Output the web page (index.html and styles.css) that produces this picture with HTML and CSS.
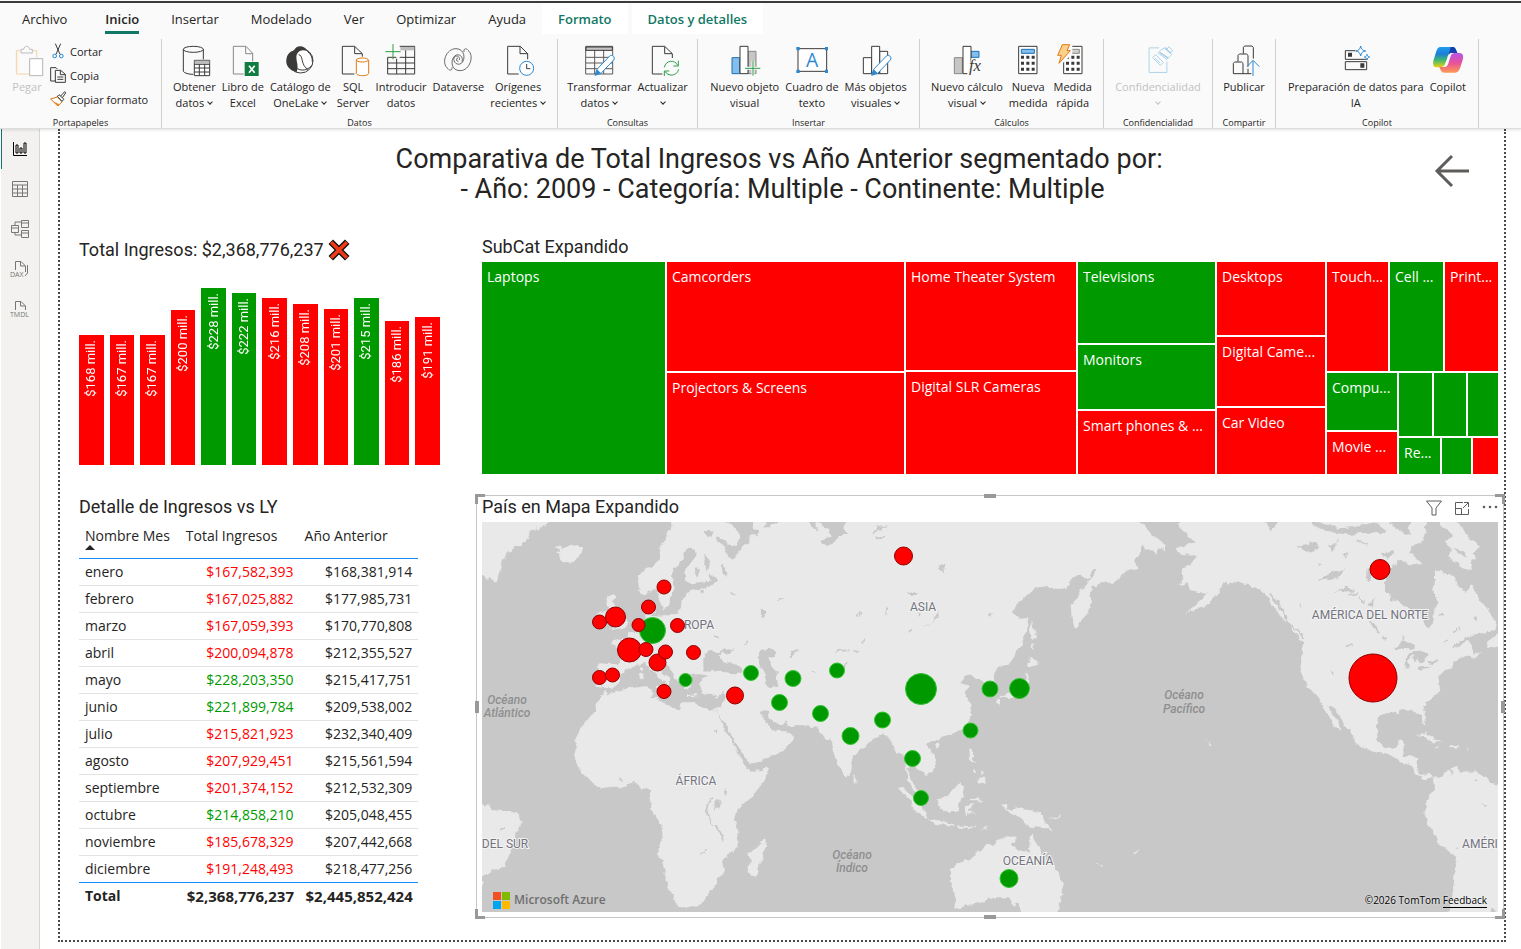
FILE: index.html
```html
<!DOCTYPE html>
<html lang="es">
<head>
<meta charset="utf-8">
<meta name="viewport" content="width=device-width, initial-scale=1">
<title>Comparativa de Total Ingresos</title>
<link rel="stylesheet" href="styles.css">
</head>
<body>
<header class="ribbon">
  <nav class="tabs" aria-label="Cinta de opciones">
    <button class="tab tab-first">Archivo</button>
    <button class="tab tab-active" aria-current="page">Inicio</button>
    <button class="tab">Insertar</button>
    <button class="tab">Modelado</button>
    <button class="tab">Ver</button>
    <button class="tab">Optimizar</button>
    <button class="tab">Ayuda</button>
    <button class="tab tab-context">Formato</button>
    <button class="tab tab-context">Datos y detalles</button>
  </nav>
  <div class="groups">
    <section class="group group-clipboard">
      <div class="tools clipboard">
        <button class="tool" disabled>
          <svg class="icon" viewBox="0 0 96 96"><path d="M28 20H16V90H56M66 20H77V40" class="s" stroke="#f3d3a8"/><path d="M20 24V86" class="s" stroke="#fbeedb"/><path d="M30 27V16H38C40 4 54 4 56 16H64V27Z" class="s" stroke="#bdbdbd"/><path d="M56 44H95V95H56Z" class="s" fill="#fff" stroke="#b5b5b5"/></svg>
          <span>Pegar</span>
        </button>
        <div class="small-tools">
          <button class="small-tool"><svg class="icon-small" viewBox="0 0 48 48"><path d="M16 2L30 34M32 2L18 34" class="s" stroke="#3b3a39"/><circle cx="14" cy="39" r="5.500" class="s" stroke="#1f87cc"/><circle cx="34" cy="39" r="5.500" class="s" stroke="#1f87cc"/></svg>Cortar</button>
          <button class="small-tool"><svg class="icon-small" viewBox="0 0 48 48"><path d="M18 42H2V2H18L22 6M16 10H32L46 22V46H16ZM31 10V23H46M22 30H40M22 37H40" class="s" stroke="#3b3a39"/></svg>Copia</button>
          <button class="small-tool"><svg class="icon-small" viewBox="0 0 48 48"><path d="M2 24L22 18L36 32L24 45Z" fill="#fff" class="s" stroke="#d8730b"/><path d="M8 30L28 40L22 45Z" fill="#e98a2b"/><path d="M22 16L27 11L42 25L36 31ZM32 15L44 2L47 6L37 20" class="s" stroke="#3b3a39"/></svg>Copiar formato</button>
        </div>
      </div>
      <h2 class="group-name">Portapapeles</h2>
    </section>

    <section class="group group-data">
      <div class="tools">
        <button class="tool"><svg class="icon" viewBox="0 0 96 96"><path d="M16 16V82C20 88 32 91 46 91M76 16V46" class="s k"/><ellipse cx="46" cy="16" rx="30" ry="9" class="s k"/><path d="M49 49H95V95H49Z" fill="#fff" class="s k"/><path d="M50 50H94V59H50Z" fill="#bdbdbd"/><path d="M49 61H95M49 72H95M49 84H95M64 61V95M80 61V95" class="s k" stroke-width="2"/></svg><span>Obtener<br>datos <i class="chev"></i></span></button>
        <button class="tool"><svg class="icon" viewBox="0 0 96 96"><path d="M50 90H19V7H57L77 28V52M56 8V29H77" class="s" stroke="#8a8886"/><path d="M53 54H95V96H53Z" fill="#107c41"/><path d="M66 65L83 86M83 65L66 86" stroke="#fff" stroke-width="5"/></svg><span>Libro de<br>Excel</span></button>
        <button class="tool"><svg class="icon" viewBox="0 0 96 96"><circle cx="50" cy="50" r="37" fill="#fff" class="s k" stroke-width="4"/><path d="M30 20C36 2 62 2 70 22C58 16 44 18 38 32C34 50 46 62 38 84C16 80 2 62 8 42C10 30 20 20 30 20Z" fill="#3b3a39"/><path d="M44 32C58 32 50 66 72 76M30 64C42 82 66 84 84 64M70 22C80 30 86 40 85 54" class="s k" stroke-width="4"/></svg><span>Catálogo de<br>OneLake <i class="chev"></i></span></button>
        <button class="tool"><svg class="icon" viewBox="0 0 96 96"><path d="M52 90H16V7H53L76 29V38M53 8V29H75" class="s k"/><path d="M58 48V89C62 97 92 97 95 89V48" fill="#fff" class="s" stroke="#e07b16"/><ellipse cx="76" cy="48" rx="18" ry="6" fill="#fff" class="s" stroke="#e07b16"/></svg><span>SQL<br>Server</span></button>
        <button class="tool"><svg class="icon" viewBox="0 0 96 96"><path d="M8 7H89V90H8ZM8 40H89M8 57H89M8 74H89M35 18V90M62 18V90" class="s k"/><path d="M46 9H88V19H46Z" fill="#bdbdbd"/><path d="M0 2H44V44H0Z" fill="#fafafa"/><path d="M8 46V40H34" class="s k"/><path d="M24 0V46M1 23H47" class="s" stroke="#2d9f47"/></svg><span>Introducir<br>datos</span></button>
        <button class="tool"><svg class="icon" viewBox="0 0 96 96"><path d="M18 74C-4 58 12 14 42 14C68 14 72 46 58 58C46 66 32 54 36 42C40 32 56 36 52 48M78 19C98 34 84 80 54 80C28 80 24 50 38 36C50 26 66 38 60 54M18 74C24 82 32 78 30 70M78 19C72 11 64 14 66 24M48 42A5 5 0 1 0 49 52" class="s" stroke="#69696b"/></svg><span>Dataverse</span></button>
        <button class="tool"><svg class="icon wide" viewBox="0 0 108 96"><path d="M56 90H23V7H61L83 29V46M60 8V29H83" class="s k"/><circle cx="80" cy="73" r="21" fill="#fff" class="s" stroke="#2b88d0"/><path d="M80 60V74H91" class="s k"/></svg><span>Orígenes<br>recientes <i class="chev"></i></span></button>
      </div>
      <h2 class="group-name">Datos</h2>
    </section>

    <section class="group group-queries">
      <div class="tools">
        <button class="tool"><svg class="icon" viewBox="0 0 96 96"><path d="M8 7H89V90H8ZM8 40H89M8 57H89M8 74H89M35 18V90M62 18V90" class="s" stroke="#5d5b59"/><path d="M9 9H88V19H9Z" fill="#c8c6c4" class="s" stroke="#3b3a39" stroke-width="2"/><path d="M36 94L42 76L80 36C88 30 98 40 92 48L54 88Z" fill="#fff" class="s" stroke="#2b88d0"/><path d="M36 94L42 76L54 88Z" fill="#2b88d0"/></svg><span>Transformar<br>datos <i class="chev"></i></span></button>
        <button class="tool"><svg class="icon" viewBox="0 0 96 96"><path d="M46 90H16V7H53L76 29V42M53 8V29H75" class="s k"/><path d="M52 70C56 48 84 46 92 64M94 50V66H79M95 76C90 98 62 98 54 82M52 96V81H67" class="s" stroke="#2d9f47"/></svg><span>Actualizar<br><i class="chev"></i></span></button>
      </div>
      <h2 class="group-name">Consultas</h2>
    </section>

    <section class="group group-insert">
      <div class="tools">
        <button class="tool"><svg class="icon" viewBox="0 0 96 96"><path d="M9 41H32V89H9Z" fill="#83beec" class="s" stroke="#1f6fb2"/><path d="M57 22H81V89H57Z" fill="#c8c6c4" class="s" stroke="#8a8886"/><path d="M33 7H57V89H33Z" fill="#fff" class="s k"/><path d="M48 73H96M72 50V96" stroke="#fafafa" stroke-width="9"/><path d="M48 73H94M72 50V95" class="s" stroke="#2d9f47"/></svg><span>Nuevo objeto<br>visual</span></button>
        <button class="tool"><svg class="icon" viewBox="0 0 96 96"><path d="M6 14H92V82H6Z" fill="#fff" class="s k"/><path d="M1 9H11V19H1ZM87 9H96V19H87ZM1 77H11V87H1ZM87 77H96V87H87Z" fill="#2b88d0"/><text x="48" y="69" class="glyph-a">A</text></svg><span>Cuadro de<br>texto</span></button>
        <button class="tool"><svg class="icon" viewBox="0 0 96 96"><path d="M10 41H35V89H10ZM59 22H83V89H59Z" fill="#fff" class="s k"/><path d="M35 7H59V89H35Z" fill="#fff" class="s k"/><path d="M35 94L41 76L79 36C87 30 97 40 91 48L53 88Z" fill="#fff" class="s" stroke="#2b88d0"/><path d="M35 94L41 76L53 88Z" fill="#2b88d0"/></svg><span>Más objetos<br>visuales <i class="chev"></i></span></button>
      </div>
      <h2 class="group-name">Insertar</h2>
    </section>

    <section class="group group-calc">
      <div class="tools">
        <button class="tool"><svg class="icon" viewBox="0 0 96 96"><path d="M10 41H34V89H10Z" fill="#c8c6c4" class="s" stroke="#8a8886"/><path d="M60 22H84V40H60Z" fill="#83beec" class="s" stroke="#1f6fb2"/><path d="M36 7H60V89H36Z" fill="#fff" class="s k"/><path d="M48 92L62 42H96V96Z" fill="#fafafa"/><text x="72" y="81" class="glyph-fx">fx</text></svg><span>Nuevo cálculo<br>visual <i class="chev"></i></span></button>
        <button class="tool"><svg class="icon" viewBox="0 0 96 96"><path d="M20 7H75V89H20Z" fill="#fff" class="s k"/><path d="M28 16H67V28H28Z" fill="#83beec" class="s" stroke="#1f6fb2"/><path d="M27 40H68M27 58H68M27 76H68" stroke="#3b3a39" stroke-width="9" stroke-dasharray="9 7"/></svg><span>Nueva<br>medida</span></button>
        <button class="tool"><svg class="icon" viewBox="0 0 96 96"><path d="M20 7H75V89H20Z" fill="#fff" class="s k"/><path d="M28 16H67V28H28Z" fill="#d2d0ce" class="s" stroke="#8a8886"/><path d="M27 40H68M27 58H68M27 76H68" stroke="#3b3a39" stroke-width="9" stroke-dasharray="9 7"/><path d="M0 0H46V30L8 66H0Z" fill="#fafafa"/><path d="M16 2H38L30 20H40L6 58L13 34H2Z" fill="#fbd08a" class="s" stroke="#e07b16" stroke-width="4"/></svg><span>Medida<br>rápida</span></button>
      </div>
      <h2 class="group-name">Cálculos</h2>
    </section>

    <section class="group group-sens">
      <div class="tools">
        <button class="tool" disabled><svg class="icon" viewBox="0 0 108 96"><path d="M58 7H24V90H84V54" class="s" stroke="#a5cfe8"/><path d="M46 30L72 56L62 66L36 40ZM44 41L61 58M64 14L78 6L84 12L90 3L104 16L94 23L100 30L84 46L54 24Z" class="s" stroke="#a5cfe8"/><path d="M60 22L88 42M78 8L98 26" stroke="#a5cfe8" stroke-width="5"/></svg><span>Confidencialidad<br><i class="chev"></i></span></button>
      </div>
      <h2 class="group-name">Confidencialidad</h2>
    </section>

    <section class="group group-share">
      <div class="tools">
        <button class="tool"><svg class="icon" viewBox="0 0 96 96"><path d="M16 89V58L20 54H41L45 58V89ZM30 53V34L34 30H56L60 34V68M46 29V10L50 6H72L76 10V44M45 89H70M60 74V89" class="s k"/><path d="M75 96V50M57 68L75 49L94 68" class="s" stroke="#2b88d0" stroke-width="4"/></svg><span>Publicar<br>&nbsp;</span></button>
      </div>
      <h2 class="group-name">Compartir</h2>
    </section>

    <section class="group group-copilot">
      <div class="tools">
        <button class="tool"><svg class="icon" viewBox="0 0 96 96"><path d="M46 20H16V46H80V44M16 53H80V77H16Z" class="s k" stroke-width="4"/><path d="M24 26H36V38H24ZM61 58H73V71H61Z" fill="#3b3a39"/><path d="M62 6C64 16 68 20 77 21C68 22 64 26 62 36C60 26 56 22 47 21C56 20 60 16 62 6ZM81 31C82 37 84 38 89 39C84 40 82 42 81 48C80 42 78 40 73 39C78 38 80 37 81 31Z" fill="#fff" class="s" stroke="#2b88d0"/></svg><span>Preparación de datos para<br>IA</span></button>
        <button class="tool"><svg class="icon" viewBox="0 0 96 96"><defs><linearGradient id="cpA" x1="0" y1="0" x2="0" y2="1"><stop offset="0" stop-color="#1d9cf0"/><stop offset=".35" stop-color="#1c7fd6"/><stop offset=".65" stop-color="#42b96d"/><stop offset="1" stop-color="#f2cf10"/></linearGradient><linearGradient id="cpB" x1="0" y1="0" x2="0" y2="1"><stop offset="0" stop-color="#b456ea"/><stop offset=".5" stop-color="#e8509a"/><stop offset="1" stop-color="#fd9a52"/></linearGradient></defs><path d="M26 9H62C70 9 72 17 76 27H58C50 27 48 34 45 44L39 60C36 67 32 70 24 70H15C4 70 1 62 5 47L13 22C16 13 19 9 26 9Z" fill="url(#cpA)"/><path d="M70 86H38C28 86 26 79 22 69H38C46 69 48 62 51 52L56 36C59 29 63 27 71 27H81C92 27 96 35 92 48L84 73C80 82 77 86 70 86Z" fill="url(#cpB)"/><path d="M56 9H62C70 9 72 17 76 27H58C54 27 52 29 50 32Z" fill="#173fae"/></svg><span>Copilot</span></button>
      </div>
      <h2 class="group-name">Copilot</h2>
    </section>
  </div>
</header>

<div class="workspace">
  <nav class="rail" aria-label="Vistas">
    <button class="rail-item rail-active" aria-label="Vista de informe"><svg viewBox="0 0 16 16"><path d="M1.500 1V14.500H15M4 4H6V12H4ZM8 7H10V12H8ZM12 2H14V12H12Z" class="r"/></svg></button>
    <button class="rail-item" aria-label="Vista de tabla"><svg viewBox="0 0 16 16"><path d="M.5.500H15.500V15.500H.5ZM.5 4H15.500M.5 8H15.500M.5 12H15.500M5.500 4V15.500M10.500 4V15.500" class="r"/></svg></button>
    <button class="rail-item" aria-label="Vista de modelo"><svg class="rail-wide" viewBox="0 0 20 20"><path d="M1.500 6.500H8.500V13.500H1.500ZM1.500 9H8.500M11.500 1.500H18.500V8.500H11.500ZM11.500 4H18.500M11.500 11.500H18.500V18.500H11.500ZM11.500 14H18.500M5 6V3H11M5 14V16H11" class="r"/></svg></button>
    <button class="rail-item" aria-label="Consultas DAX"><svg class="rail-wide" viewBox="0 0 20 20"><path d="M5.500 11V2.500H11L15.500 7V13M10.500 2.500V7H15M17.500 6V14L15 17" class="r"/><text x="0" y="18" class="rail-text">DAX</text></svg></button>
    <button class="rail-item" aria-label="Vista TMDL"><svg class="rail-wide" viewBox="0 0 20 20"><path d="M5.500 11V2.500H11L15.500 7V11M10.500 2.500V7H15" class="r"/><text x="0" y="18" class="rail-text">TMDL</text></svg></button>
  </nav>

  <main class="canvas">
    <div class="page">
      <div class="page-head">
        <h1>Comparativa de Total Ingresos vs Año Anterior segmentado por:&nbsp;<br>- Año: 2009 - Categoría: Multiple - Continente: Multiple</h1>
        <button class="back" aria-label="Atrás"><svg viewBox="0 0 36 36"><path d="M35 18H3M18 3L3 18L18 33" fill="none" stroke="#5f5d5b" stroke-width="3"/></svg></button>
      </div>

      <section class="visual income">
        <h2 class="visual-title">Total Ingresos: $2,368,776,237 <svg class="cross" viewBox="0 0 24 24"><path d="M3 3L21 21M21 3L3 21" stroke="#111" stroke-width="7"/><path d="M3.500 3.500L20.500 20.500M20.500 3.500L3.500 20.500" stroke="#f03a17" stroke-width="4"/></svg></h2>
        <div class="bars">
          <div class="bar" style="height:73.4%"><span>$168 mill.</span></div>
          <div class="bar" style="height:73.2%"><span>$167 mill.</span></div>
          <div class="bar" style="height:73.2%"><span>$167 mill.</span></div>
          <div class="bar" style="height:87.7%"><span>$200 mill.</span></div>
          <div class="bar up" style="height:100%"><span>$228 mill.</span></div>
          <div class="bar up" style="height:97.2%"><span>$222 mill.</span></div>
          <div class="bar" style="height:94.6%"><span>$216 mill.</span></div>
          <div class="bar" style="height:91.1%"><span>$208 mill.</span></div>
          <div class="bar" style="height:88.2%"><span>$201 mill.</span></div>
          <div class="bar up" style="height:94.2%"><span>$215 mill.</span></div>
          <div class="bar" style="height:81.4%"><span>$186 mill.</span></div>
          <div class="bar" style="height:83.8%"><span>$191 mill.</span></div>
        </div>
      </section>

      <section class="visual subcat">
        <h2 class="visual-title">SubCat Expandido</h2>
        <div class="treemap">
          <div class="tile up">Laptops</div>
          <div class="rows rows-b"><div class="tile">Camcorders</div><div class="tile">Projectors &amp; Screens</div></div>
          <div class="rows rows-c"><div class="tile">Home Theater System</div><div class="tile">Digital SLR Cameras</div></div>
          <div class="rows rows-d"><div class="tile up">Televisions</div><div class="tile up">Monitors</div><div class="tile">Smart phones &amp; ...</div></div>
          <div class="rows rows-e"><div class="tile">Desktops</div><div class="tile">Digital Came...</div><div class="tile">Car Video</div></div>
          <div class="rows rows-f">
            <div class="cols cols-f"><div class="tile">Touch...</div><div class="tile up">Cell ...</div><div class="tile">Print...</div></div>
            <div class="cols cols-g">
              <div class="rows rows-g"><div class="tile up">Compu...</div><div class="tile">Movie ...</div></div>
              <div class="rows rows-h">
                <div class="cols cols-h"><div class="tile up"></div><div class="tile up"></div><div class="tile up"></div></div>
                <div class="cols cols-i"><div class="tile up">Re...</div><div class="tile up"></div><div class="tile"></div></div>
              </div>
            </div>
          </div>
        </div>
      </section>

      <section class="visual detail">
        <h2 class="visual-title">Detalle de Ingresos vs LY</h2>
        <table>
          <colgroup><col class="col-month"><col class="col-value"><col class="col-value"></colgroup>
          <thead><tr><th scope="col" aria-sort="ascending">Nombre Mes<i class="sort"></i></th><th scope="col">Total Ingresos</th><th scope="col">Año Anterior</th></tr></thead>
          <tbody>
            <tr><td>enero</td><td class="down">$167,582,393</td><td>$168,381,914</td></tr>
            <tr><td>febrero</td><td class="down">$167,025,882</td><td>$177,985,731</td></tr>
            <tr><td>marzo</td><td class="down">$167,059,393</td><td>$170,770,808</td></tr>
            <tr><td>abril</td><td class="down">$200,094,878</td><td>$212,355,527</td></tr>
            <tr><td>mayo</td><td class="rise">$228,203,350</td><td>$215,417,751</td></tr>
            <tr><td>junio</td><td class="rise">$221,899,784</td><td>$209,538,002</td></tr>
            <tr><td>julio</td><td class="down">$215,821,923</td><td>$232,340,409</td></tr>
            <tr><td>agosto</td><td class="down">$207,929,451</td><td>$215,561,594</td></tr>
            <tr><td>septiembre</td><td class="down">$201,374,152</td><td>$212,532,309</td></tr>
            <tr><td>octubre</td><td class="rise">$214,858,210</td><td>$205,048,455</td></tr>
            <tr><td>noviembre</td><td class="down">$185,678,329</td><td>$207,442,668</td></tr>
            <tr><td>diciembre</td><td class="down">$191,248,493</td><td>$218,477,256</td></tr>
          </tbody>
          <tfoot><tr><td>Total</td><td>$2,368,776,237</td><td>$2,445,852,424</td></tr></tfoot>
        </table>
      </section>

      <section class="visual map-visual">
        <div class="map-head">
          <h2 class="visual-title">País en Mapa Expandido</h2>
          <div class="map-actions">
            <button aria-label="Filtros"><svg viewBox="0 0 16 16"><path d="M.5 1H15.500L10 8V15H6V8Z" class="r"/></svg></button>
            <button aria-label="Modo de enfoque"><svg viewBox="0 0 16 16"><path d="M9 2.500H1.500V14.500H14.500V9M1.500 8.500H7.500V14.500M9 8L14 3M10 2.500H14.500V7" class="r"/></svg></button>
            <button aria-label="Más opciones"><svg viewBox="0 0 16 16"><circle cx="2" cy="7" r="1.300"/><circle cx="8" cy="7" r="1.300"/><circle cx="14" cy="7" r="1.300"/></svg></button>
          </div>
        </div>
        <div class="map">
          <svg class="world" viewBox="482 522 1016 390" role="img" aria-label="Mapa de países">
            <defs>
              <filter id="coast" filterUnits="userSpaceOnUse" x="470" y="510" width="1040" height="414"><feTurbulence type="fractalNoise" baseFrequency=".14" numOctaves="3" seed="4"/><feDisplacementMap in="SourceGraphic" scale="6" xChannelSelector="R" yChannelSelector="G"/></filter>
            </defs>
            <rect x="470" y="510" width="1040" height="414" fill="#c8c8c8"/>
            <g filter="url(#coast)">
            <g transform="translate(470 485) scale(.33333)">
              <path class="land" d="M15 90H245L240 111L225 122L205 130L180 135L175 155L165 170L150 185L130 182L125 200L105 205L107 225L95 230L90 255L85 270L80 292L70 290L65 278L50 282L36 270L15 260Z
              M256 180L275 183L272 192L290 185L310 182L325 178L338 192L335 208L318 222L297 236L275 230L270 210L258 205L272 200Z
              M412 330L430 325L438 335L425 350L440 365L450 385L468 400L475 415L465 430L440 432L415 436L430 425L420 415L418 395L425 380L415 365L410 345ZM385 380L405 378L410 395L400 425L375 428L368 410Z
              M558 603L590 600L585 614ZM508 567L520 564L520 580L510 585ZM513 545L519 543L519 558L513 556ZM655 628L682 630L682 634L656 633ZM730 634L748 630L740 638Z
              M600 90H1065V732L1010 724L945 722L920 735L930 735L948 745L970 752L965 770L950 790L920 805L880 825L838 838L832 828L822 810L800 785L785 750L765 715L740 683L730 672L755 668L762 640L765 625L740 628L715 630L695 622L690 600L695 580L720 572L690 568L660 570L668 590L660 605L645 610L630 590L615 575L600 548L585 535L570 525L560 522L558 540L575 560L602 582L592 598L578 588L560 570L540 550L525 535L500 540L485 550L470 555L450 570L450 590L440 600L425 612L410 612L400 605L380 602L374 580L385 560L380 535L440 538L455 520L450 500L440 485L420 475L440 465L470 462L475 445L505 435L520 415L530 400L528 375L525 350L542 345L545 365L558 380L545 392L570 395L590 388L622 387L632 370L640 340L655 320L690 310L730 300L722 290L700 290L660 295L645 280L645 255L660 235L678 215L675 195L655 188L645 200L640 225L620 245L606 265L608 290L618 310L600 335L598 360L580 375L568 345L558 305L545 315L525 330L512 325L508 290L505 270L525 255L550 240L570 215L575 185L590 150L605 125Z
              M738 678L700 668L665 655L632 655L628 673L600 665L575 650L545 635L545 610L530 603L490 608L450 618L415 628L403 614L400 630L380 655L375 680L345 710L325 745L315 765L320 790L312 825L325 850L345 870L370 895L392 910L430 905L465 905L475 893L498 895L510 912L530 910L545 925L538 955L550 985L572 1010L578 1050L562 1085L565 1110L580 1140L590 1195L605 1225L622 1265L650 1268L690 1258L715 1230L738 1200L740 1180L760 1165L762 1140L758 1125L800 1090L806 1070L805 1035L793 1000L800 975L850 930L885 885L897 850L845 860L832 848L815 825L795 790L775 750L755 712Z
              M882 1060L889 1080L880 1110L860 1172L845 1177L833 1160L840 1130L836 1105L860 1088Z
              M15 955L36 958L55 962L65 972L95 975L120 975L152 997L155 1015L140 1040L130 1065L125 1100L105 1135L95 1150L65 1155L45 1170L36 1180V1210H15Z"/>
              <path class="sea" d="M735 150L770 175L800 180L815 160L805 135L775 118L750 90H850L845 130L870 140L862 152L838 150L838 175L815 185L800 210L790 225L775 215L765 185L740 165Z
              M880 128L895 108V90H950L925 115L898 125ZM1005 90H1040L1038 108L1060 130L1060 150L1030 130Z
              M700 520L715 495L735 505L760 494L745 512L765 530L800 540L820 550L815 565L790 568L760 558L730 557L700 560ZM755 497L795 490L770 510Z
              M862 518L880 495L905 490L918 500L912 515L895 520L905 545L925 560L920 575L925 605L900 608L885 600L888 570L875 545Z
              M870 675L890 680L900 700L915 712L940 715L947 706L950 720L930 732L910 738L900 728L887 710Z
              M730 955L750 945L748 970L735 972ZM680 245L690 255L682 275L674 262ZM715 270L735 272L742 290L725 298ZM690 315L702 315L700 330L692 328ZM755 235L765 240L770 280L758 265ZM778 315L794 325L790 332ZM700 135L730 140L725 155L705 150ZM705 210L718 225L712 260L702 245ZM875 370L890 380L880 395L872 380ZM735 740L742 735L740 750ZM450 875L460 890L448 890Z"/>
              <path class="water-line" d="M730 935C700 950 710 1000 725 1020M735 1018L755 1040L758 1070M770 915L765 925M690 1110L710 1092M922 350L938 338M875 395L885 382M960 520L968 500L982 495M730 455L745 462M822 480L830 470M90 1036L105 1032"/>
            </g>
            <g transform="translate(720 515) scale(.33333)">
              <path class="land" d="M290 0H1200V187L1180 205L1160 200L1115 213L1110 235L1115 260L1100 300L1065 343L1055 310L1052 270L1075 240L1110 195L1130 165L1118 165L1100 198L1085 175L1070 178L1045 205L1035 225L1000 215L945 220L920 240L875 292L900 310L925 310L918 350L905 385L880 430L865 450L840 452L822 480L822 495L830 510L832 530L815 545L795 540L790 500L765 490L755 475L725 495L722 505L750 513L735 530L745 555L757 580L750 610L735 640L700 655L665 668L655 680L640 672L618 690L645 725L648 755L620 782L600 765L580 752L562 762L575 800L600 830L590 835L570 810L560 780L555 740L545 712L528 718L520 690L500 665L490 655L470 670L445 680L430 700L398 725L398 765L378 788L362 765L345 725L335 695L332 665L318 675L300 655L290 640Z
              M935 315L942 340L948 370L935 372L930 340ZM932 428L958 445L940 457L920 450ZM918 475L928 490L925 510L925 535L900 548L860 545L835 548L870 530L900 520L915 500ZM830 552L842 552L840 572L832 567ZM937 382L942 385L940 405L935 400Z
              M645 688L662 684L652 700ZM748 700L760 705L758 730L765 745L750 737ZM770 795L795 783L797 806L775 802ZM760 762L770 768L766 776ZM782 762L790 775L780 780Z
              M398 780L410 795L408 805L398 805ZM530 815L550 820L590 860L620 890L618 908L585 885L560 845ZM618 910L650 915L702 927V934L650 927ZM710 931L770 935V940L712 938ZM778 946L802 934L800 940Z
              M650 850L680 845L700 825L718 803L732 815L725 850L712 888L690 892L660 880ZM735 870L765 868L748 880L765 900L745 890L742 905ZM750 851L788 851V856H750Z
              M842 868L862 870L860 885L880 880L895 875L960 895L975 920L998 948L975 940L930 935L920 920L880 900L860 888ZM985 908L1010 908L1022 898L1025 904L1010 913Z
              M690 1065L710 1045L750 1035L775 1010L805 985L822 995L835 975L865 963L888 970L878 990L905 1012L925 1015L930 975L938 958L950 985L975 1030L1005 1060L1022 1085L1032 1115L1020 1160L1000 1215H910L895 1165L880 1175L870 1150L830 1145L790 1160L765 1170L735 1172L720 1182L703 1178L705 1150L690 1100ZM1130 1043L1143 1053L1140 1056Z"/>
              <path class="sea" d="M265 0H380L370 40L385 60L355 60L345 80L320 90L300 78L335 65L330 45ZM655 285V305L630 328L605 340L640 318ZM655 148L678 150L668 172L660 165ZM803 295H820L810 305ZM564 232L596 235L592 240H568ZM1155 0H1190L1178 30L1160 24ZM595 290L602 296L598 310Z"/>
              <path class="water-line" d="M345 415L358 406H390M407 408L416 413M498 298L502 275M460 60L470 40L502 34M470 70L495 68M425 385L436 372M570 352L577 342M276 470L290 474M408 302L424 292M212 428L218 412L236 406M372 456L382 440"/>
            </g>
            <g transform="translate(1100 515) scale(.33333)">
              <path class="land" d="M0 0H100L118 21L140 45L175 75L200 90L195 105L175 100L170 122L150 105L125 95L118 115L105 140L112 163L85 165L55 187L35 207L0 203Z
              M245 0L240 40L275 70L285 85L225 100L245 120L287 122L280 140L245 165L250 185L235 210L265 205L275 225L300 235L320 235L300 260L255 297L320 270L350 240L375 195L385 210L410 200L470 215L500 245L525 280L545 310L570 330L580 350L610 380L605 410L602 470L620 510L660 555L685 600L705 635L724 655L715 625L700 600L683 570L700 580L730 620L762 660L765 685L800 705L850 718L870 720L905 742L935 752L945 775L975 793L1000 785L985 777L960 780L948 755L952 725L905 722L915 680L895 675L885 700L855 700L835 680L828 640L835 605L870 590L895 598L900 585L940 587L960 600L975 635L978 610L970 570L1000 545L1018 530L1012 490L1035 465L1060 460L1065 435L1110 420L1115 430L1150 410L1120 415L1115 395L1105 375L1070 395L1055 405L1080 375L1120 360L1190 345L1190 330L1170 290L1140 255L1115 205L1100 235L1075 215L1065 185L1035 170L1005 165L1005 200L1000 225L1012 265L1000 295L992 340L975 335L965 295L925 280L900 262L870 255L868 232L855 230L855 195L880 150L900 140L925 115L940 90L970 80L975 40L995 0Z
              M1000 0H1060L1090 45L1110 70L1135 95L1120 110L1130 130L1110 135L1120 165L1085 155L1060 135L1045 125L1055 100L1035 80L1060 60L1030 40ZM905 135L930 110L950 130L968 148L925 148Z
              M1160 382L1190 360L1215 362V388L1165 398ZM945 660L975 657L1025 682L1000 682L975 667ZM1045 690L1080 695L1065 702L1045 698ZM1003 699L1014 700L1010 704ZM1095 699L1104 700L1100 704Z
              M1000 783L1020 790L1035 770L1075 755L1085 770L1130 770L1160 785L1175 805L1215 812V1215H1045L1060 1120L1068 1025L1055 1015L1020 990L1000 950L972 905L980 860L1005 825L1003 800ZM316 670L324 675L330 684L335 690L328 690L325 680ZM100 1013L118 1003L106 1017Z"/>
              <path class="sea" d="M475 0H540L530 30L510 50L505 35ZM630 15L720 40L770 35L830 20L860 55L800 50L750 60L690 50L645 35ZM870 25L905 0H940L925 45L935 60L905 55ZM590 95L625 90L630 75L650 85L655 100L625 115L610 105ZM665 190L700 170L740 160L710 188L672 196ZM700 235L730 218L765 222L760 230L725 228ZM685 95L705 88L695 108ZM780 240L792 262L785 265ZM805 270L825 250L815 275ZM806 315L822 325L840 355L830 355L815 335ZM730 120L745 112L740 130ZM845 112L882 105L865 135ZM800 165L835 155L820 175L805 200L798 185ZM650 140L668 150L655 152ZM594 262L610 285L600 275ZM880 402L895 388L910 372L920 382L945 390L943 403L915 402ZM913 440L930 415L940 412L925 440L926 460L915 462ZM935 410L965 412L985 415L975 440L960 445L950 430L948 445ZM953 462L995 450L980 462L955 468ZM985 440L1015 433L1012 442L988 446ZM850 365L862 368L855 375ZM905 360L915 368L908 372ZM1075 335L1085 340L1078 347ZM1025 290L1035 302L1015 305ZM1118 312L1130 305L1125 322ZM695 462L706 475L698 475ZM1150 868L1162 872L1155 876ZM1070 995L1078 998L1072 1003ZM1125 792L1133 796L1127 800ZM1050 762L1060 778L1052 782ZM1165 1215L1175 1180L1185 1185L1190 1215ZM1010 45L1025 55L1015 70ZM1060 95L1090 110L1100 130L1075 115ZM990 100L1000 95L1000 110Z"/>
              <path class="water-line" d="M738 390L758 391M655 195L690 190M745 240L775 235M720 75L700 100M770 75L800 90M1030 380L1040 375M1060 350L1072 340M960 235L975 245M510 235L560 310M525 245L575 345M560 320L612 365"/>
            </g>
            </g>
            <g class="regions">
              <text x="923" y="611">ASIA</text><text x="699" y="629">ROPA</text><text x="696" y="785">ÁFRICA</text><text x="1028" y="865">OCEANÍA</text><text x="1370" y="619">AMÉRICA DEL NORTE</text><text x="505" y="848">DEL SUR</text><text x="1480" y="848">AMÉRI</text>
            </g>
            <g class="oceans">
              <text x="507" y="704">Océano</text><text x="507" y="717">Atlántico</text><text x="852" y="859">Océano</text><text x="852" y="872">Índico</text><text x="1184" y="699">Océano</text><text x="1184" y="713">Pacífico</text>
            </g>
            <g class="dots-up">
              <circle cx="652.500" cy="630.500" r="13"/><circle cx="685.500" cy="680" r="6.500"/><circle cx="751" cy="673" r="7.500"/><circle cx="793" cy="678.500" r="8"/><circle cx="779.500" cy="702.500" r="8"/><circle cx="837" cy="670.500" r="7.500"/><circle cx="820.500" cy="713.500" r="8"/><circle cx="850.500" cy="736" r="8.500"/><circle cx="882.500" cy="720" r="8"/><circle cx="921" cy="689" r="15.500"/><circle cx="990" cy="689" r="8"/><circle cx="1019.500" cy="688.500" r="10"/><circle cx="970.500" cy="730.500" r="7.500"/><circle cx="912.500" cy="758.500" r="8"/><circle cx="921" cy="798" r="7.500"/><circle cx="1009" cy="878.500" r="9"/>
            </g>
            <g class="dots-down">
              <circle cx="664" cy="587" r="7"/><circle cx="648.500" cy="607" r="7"/><circle cx="599.500" cy="622" r="7"/><circle cx="615.500" cy="617" r="10"/><circle cx="638.500" cy="625" r="6.500"/><circle cx="677.500" cy="625.500" r="7"/><circle cx="629.500" cy="650" r="12"/><circle cx="657.500" cy="662.500" r="8.500"/><circle cx="646" cy="649.500" r="7"/><circle cx="665.500" cy="652" r="7"/><circle cx="693.500" cy="652.500" r="7"/><circle cx="599.500" cy="677.500" r="7"/><circle cx="612.500" cy="675" r="7"/><circle cx="664" cy="691.500" r="7"/><circle cx="735" cy="695.500" r="8.500"/><circle cx="903.500" cy="556" r="9"/><circle cx="1380" cy="569.500" r="10"/><circle cx="1373" cy="678" r="24"/>
            </g>
          </svg>
          <div class="azure"><svg viewBox="0 0 17 17"><path d="M0 0H8V8H0Z" fill="#f25022"/><path d="M9 0H17V8H9Z" fill="#7fba00"/><path d="M0 9H8V17H0Z" fill="#00a4ef"/><path d="M9 9H17V17H9Z" fill="#ffb900"/></svg>Microsoft Azure</div>
          <div class="credits">©2026 TomTom <a href="#feedback">Feedback</a></div>
        </div>
        <div class="selection" aria-hidden="true"><i class="h nw"></i><i class="h ne"></i><i class="h sw"></i><i class="h se"></i><i class="h n"></i><i class="h so"></i><i class="h w"></i><i class="h e"></i></div>
      </section>
    </div>
  </main>
</div>
</body>
</html>
```
FILE: styles.css
```css
* { box-sizing: border-box; }
body {
  margin: 0;
  min-height: 100vh;
  display: flex;
  flex-direction: column;
  background: #fff;
  color: #252423;
  font-family: "Open Sans", "Noto Sans", sans-serif;
}
button {
  margin: 0;
  padding: 0;
  border: 0;
  background: none;
  color: inherit;
  font: inherit;
}
h1, h2 { margin: 0; font-weight: 400; }
svg { display: block; }
.s { fill-opacity: 1; stroke-width: 3; }
.s:not([fill]) { fill: none; }
.k { stroke: #3b3a39; }
.r { fill: none; stroke: currentColor; stroke-width: 1; }

/* Ribbon */
.ribbon {
  position: relative;
  margin-top: 1px;
  border-top: 2px solid #3b3a39;
  border-bottom: 1px solid #dedede;
  background: #fafafa;
  box-shadow: 0 1px 3px rgba(0, 0, 0, .12);
}
.tabs { display: flex; height: 32px; padding-left: 6px; }
.tab { position: relative; padding: 0 16px; font-size: 13px; line-height: 32px; white-space: nowrap; }
.tab-first { padding-right: 22px; }
.tab-active { font-weight: 600; }
.tab-active::after {
  content: "";
  position: absolute;
  left: 16px;
  right: 16px;
  bottom: 1px;
  height: 3px;
  background: #117865;
}
.tab-context { height: 31px; margin-right: 4px; background: #fff; color: #117865; font-weight: 600; }
.groups { display: flex; padding-top: 4px; }
.group {
  flex: none;
  display: flex;
  flex-direction: column;
  height: 89px;
  padding-top: 5px;
  border-right: 1px solid #d2d0ce;
}
.group-clipboard { width: 162px; }
.group-data { width: 396px; }
.group-queries { width: 140px; }
.group-insert { width: 222px; }
.group-calc { width: 184px; }
.group-sens { width: 109px; }
.group-share { width: 63px; }
.group-copilot { width: 203px; }
.group-name { margin-top: auto; font-size: 9px; line-height: 11px; text-align: center; }
.tools { display: flex; justify-content: center; align-items: flex-start; }
.tool {
  display: flex;
  flex-direction: column;
  align-items: center;
  gap: 3px;
  padding: 0 3px;
  font-size: 11px;
  line-height: 16px;
  text-align: center;
  white-space: nowrap;
}
.tool:disabled { color: #c3c1bf; }
.icon { width: 32px; height: 32px; overflow: visible; }
.icon.wide { width: 36px; }
.glyph-a { fill: #2b88d0; font: 58px "Open Sans", sans-serif; text-anchor: middle; }
.glyph-fx { fill: #3b3a39; font: italic 50px "Liberation Serif", serif; text-anchor: middle; }
.chev {
  display: inline-block;
  width: 4px;
  height: 4px;
  margin: 0 1px 3px;
  border: solid currentColor;
  border-width: 0 1px 1px 0;
  transform: rotate(45deg);
}
.clipboard { justify-content: flex-start; gap: 4px; padding-left: 8px; }
.small-tools { display: flex; flex-direction: column; margin-top: -5px; }
.small-tool { display: flex; align-items: center; gap: 4px; height: 24px; font-size: 11px; white-space: nowrap; }
.icon-small { width: 16px; height: 16px; }

/* Workspace */
.workspace { flex: 1; display: flex; }
.rail {
  flex: none;
  width: 39px;
  margin-left: 1px;
  border-right: 1px solid #d8d6d4;
  background: #f3f2f1;
  color: #797775;
}
.rail-item { display: flex; width: 100%; height: 40px; align-items: center; justify-content: center; padding-right: 2px; border-left: 1px solid transparent; }
.rail-active { border-left-color: #117865; color: #000; }
.rail svg { width: 16px; height: 16px; }
.rail .rail-wide { width: 20px; height: 20px; }
.rail-text { fill: currentColor; font: 7px "Open Sans", sans-serif; }
.canvas { flex: 1; min-width: 0; padding: 0 15px 6px 18px; }
.page {
  display: grid;
  grid-template-columns: minmax(0, 361fr) minmax(0, 1016fr);
  column-gap: 42px;
  row-gap: 20px;
  padding: 15px 6px 28px 19px;
  border: 2px dotted #4a4a4a;
  border-top: 0;
  font-family: Roboto, sans-serif;
}
.page-head { grid-column: 1 / -1; display: grid; grid-template-columns: 1fr auto 1fr; align-items: center; padding: 0 12px 10px 0; }
.page-head h1 { grid-column: 2; font-size: 27px; line-height: 30px; text-align: center; }
.back { justify-self: end; width: 36px; height: 36px; margin: 0 16px 6px 0; }
.visual { position: relative; display: flex; flex-direction: column; min-width: 0; }
.visual-title { height: 28px; font-size: 18px; line-height: 26px; white-space: nowrap; }

.income { padding: 2px 0 9px; justify-content: space-between; }
.income .visual-title { display: flex; align-items: center; gap: 4px; }
.cross { width: 22px; height: 22px; }
.bars { display: flex; align-items: flex-end; gap: 6px; height: 177px; }
.bar { flex: 1; display: flex; justify-content: center; align-items: flex-start; padding-top: 5px; background: #f00; color: #fff; }
.bar.up, .tile.up { background: #009a00; }
.bar span { writing-mode: vertical-rl; transform: rotate(180deg); font-size: 13px; line-height: 16px; white-space: nowrap; }

.treemap, .rows, .cols { display: grid; gap: 2px; min-width: 0; min-height: 0; }
.treemap { height: 212px; grid-template-columns: 183fr 237fr 170fr 137fr 108fr 171fr; }
.rows-b { grid-template-rows: 109fr 101fr; }
.rows-c { grid-template-rows: 108fr 102fr; }
.rows-d { grid-template-rows: 81fr 64fr 63fr; }
.rows-e { grid-template-rows: 73fr 69fr 66fr; }
.rows-f { grid-template-rows: 109fr 101fr; }
.rows-g { grid-template-rows: 57fr 42fr; }
.rows-h { grid-template-rows: 63fr 36fr; }
.cols-f { grid-template-columns: 61fr 53fr 53fr; }
.cols-g { grid-template-columns: 70fr 99fr; }
.cols-h { grid-template-columns: 33fr 32fr 30fr; }
.cols-i { grid-template-columns: 41fr 29fr 25fr; }
.tile {
  min-width: 0;
  min-height: 0;
  padding: 5px 0 0 5px;
  overflow: hidden;
  background: #f00;
  color: #fff;
  font: 14px/20px "Open Sans", sans-serif;
  white-space: nowrap;
}

table { width: 94%; border-collapse: collapse; table-layout: fixed; font: 14px/20px "Open Sans", sans-serif; }
.col-month { width: 30%; }
.col-value { width: 35%; }
th, td { padding: 0 6px; font-weight: 400; white-space: nowrap; }
th { height: 36px; padding: 4px 5px 0; text-align: left; vertical-align: top; border-bottom: 1px solid #118dff; }
th:first-child { padding-left: 6px; }
.sort { display: block; width: 0; height: 0; margin-top: -1px; border: 5px solid transparent; border-top: 0; border-bottom-color: #252423; }
td { height: 27px; border-bottom: 1px solid #e3e3e3; text-align: right; }
td:first-child { text-align: left; }
tbody tr:last-child td { border-bottom-color: #118dff; }
tfoot td { height: 28px; border-bottom: 0; font-weight: 700; }
tfoot td + td { font-size: 15px; }
.down { color: #f00; }
.rise { color: #009a00; }

.map-head { display: flex; justify-content: space-between; }
.map-actions { display: flex; gap: 12px; align-items: center; height: 28px; color: #605e5c; }
.map-actions svg { width: 16px; height: 16px; fill: currentColor; }
.map { position: relative; overflow: hidden; }
.world { width: 100%; height: auto; }
.land { fill: #e9e9e9; }
.sea { fill: #c8c8c8; }
.water-line { fill: none; stroke: #c8c8c8; stroke-width: 5; }
.regions text, .oceans text { font: 12px Roboto, sans-serif; text-anchor: middle; fill: #74747f; stroke: #f3f3f3; stroke-width: 2; paint-order: stroke; }
.oceans text { font-style: italic; font-weight: 500; fill: #8f8f8f; stroke: none; }
.dots-up { fill: #009a00; stroke: #2fc42f; }
.dots-down { fill: #f00; stroke: #8f0000; }
.azure { position: absolute; left: 11px; bottom: 2px; display: flex; align-items: center; gap: 4px; color: #6f6f6f; font: 600 12px/20px "Open Sans", sans-serif; }
.azure svg { width: 17px; height: 17px; }
.credits { position: absolute; right: 11px; bottom: 4px; color: #000; font: 10px/14px "Open Sans", sans-serif; text-shadow: 0 0 2px #fff; }
.credits a { display: inline-block; border-bottom: 1px solid #000; color: inherit; text-decoration: none; }

.selection { position: absolute; inset: 1px -6px -6px -6px; border: 1px solid #c8c6c4; pointer-events: none; }
.h { position: absolute; width: 10px; height: 10px; border: 0 solid #999; }
.nw { left: -2px; top: -2px; border-width: 3px 0 0 3px; }
.ne { right: -2px; top: -2px; border-width: 3px 3px 0 0; }
.sw { left: -2px; bottom: -2px; border-width: 0 0 3px 3px; }
.se { right: -2px; bottom: -2px; border-width: 0 3px 3px 0; }
.n, .so { left: 50%; width: 12px; height: 4px; margin-left: -6px; background: #999; }
.n { top: -2px; }
.so { bottom: -2px; }
.w, .e { top: 50%; width: 4px; height: 12px; margin-top: -6px; background: #999; }
.w { left: -2px; }
.e { right: -2px; }
```
